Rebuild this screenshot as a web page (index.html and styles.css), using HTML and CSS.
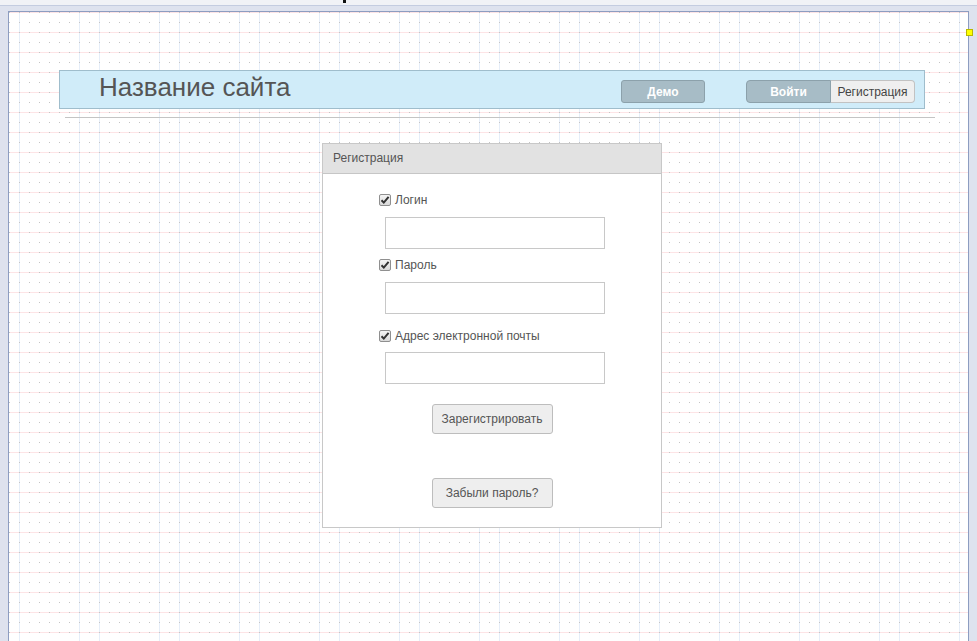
FILE: index.html
```html
<!DOCTYPE html>
<html lang="ru">
<head>
<meta charset="utf-8">
<title>Регистрация</title>
<link rel="stylesheet" href="styles.css">
</head>
<body>
<div class="topbar"><span class="cursor-mark"></span></div>
<div class="workspace">
  <div class="canvas">
    <span class="handle"></span>
    <header class="site-header">
      <h1 class="site-title">Название сайта</h1>
      <div class="header-actions">
        <button class="btn-demo">Демо</button>
        <div class="auth-group">
          <button class="auth-login">Войти</button>
          <button class="auth-register">Регистрация</button>
        </div>
      </div>
    </header>
    <hr class="separator">
    <section class="panel">
      <div class="panel-head">Регистрация</div>
      <div class="panel-body">
        <label class="check-row row-1"><span class="check"><svg viewBox="0 0 12 12" width="12" height="12"><path d="M2.5 6.2 L4.8 8.6 L9.6 2.8" fill="none" stroke="#333" stroke-width="2"/></svg></span>Логин</label>
        <div class="field"></div>
        <label class="check-row row-2"><span class="check"><svg viewBox="0 0 12 12" width="12" height="12"><path d="M2.5 6.2 L4.8 8.6 L9.6 2.8" fill="none" stroke="#333" stroke-width="2"/></svg></span>Пароль</label>
        <div class="field"></div>
        <label class="check-row row-3"><span class="check"><svg viewBox="0 0 12 12" width="12" height="12"><path d="M2.5 6.2 L4.8 8.6 L9.6 2.8" fill="none" stroke="#333" stroke-width="2"/></svg></span>Адрес электронной почты</label>
        <div class="field field-last"></div>
        <div class="actions">
          <button class="btn">Зарегистрировать</button>
          <button class="btn btn-forgot">Забыли пароль?</button>
        </div>
      </div>
    </section>
  </div>
</div>
</body>
</html>
```
FILE: styles.css
```css
* { box-sizing: border-box; }
html, body { margin: 0; padding: 0; }
body {
  width: 977px;
  height: 641px;
  overflow: hidden;
  background: #dee2ee;
  font-family: "Liberation Sans", Arial, sans-serif;
  color: #555;
}
.topbar {
  position: relative;
  height: 6px;
  background: #f1f2f6;
  border-bottom: 1px solid #c4cce0;
}
.cursor-mark {
  position: absolute;
  left: 343px;
  top: 0;
  width: 3px;
  height: 3px;
  background: #111;
}
.workspace {
  padding: 5px 8px 0 8px;
}
.canvas {
  position: relative;
  width: 961px;
  height: 630px;
  border-left: 1px solid #8d9dc1;
  border-top: 1px solid #8d9dc1;
  border-right: 1px solid #8d9dc1;
  background-color: #fff;
  background-image: url("data:image/svg+xml,%3Csvg xmlns='http://www.w3.org/2000/svg' width='80' height='20'%3E%3Crect x='10' y='0' width='1' height='20' fill='%23e6eef9'/%3E%3Crect x='70' y='0' width='1' height='20' fill='%23e6eef9'/%3E%3Crect x='0' y='0' width='80' height='1' fill='%23fde4e6'/%3E%3Cg fill='%23c4c4c4'%3E%3Crect x='0' y='0' width='1' height='1'/%3E%3Crect x='10' y='0' width='1' height='1'/%3E%3Crect x='20' y='0' width='1' height='1'/%3E%3Crect x='30' y='0' width='1' height='1'/%3E%3Crect x='40' y='0' width='1' height='1'/%3E%3Crect x='50' y='0' width='1' height='1'/%3E%3Crect x='60' y='0' width='1' height='1'/%3E%3Crect x='70' y='0' width='1' height='1'/%3E%3Crect x='0' y='10' width='1' height='1'/%3E%3Crect x='10' y='10' width='1' height='1'/%3E%3Crect x='20' y='10' width='1' height='1'/%3E%3Crect x='30' y='10' width='1' height='1'/%3E%3Crect x='40' y='10' width='1' height='1'/%3E%3Crect x='50' y='10' width='1' height='1'/%3E%3Crect x='60' y='10' width='1' height='1'/%3E%3Crect x='70' y='10' width='1' height='1'/%3E%3C/g%3E%3C/svg%3E");
  background-size: 80px 20px;
  background-position: 0 0;
  padding-top: 58px;
}
.handle {
  position: absolute;
  left: 957px;
  top: 17px;
  width: 7px;
  height: 7px;
  background: #ffff00;
  border: 1px solid #b8b800;
}
.site-header {
  margin-left: 50px;
  width: 866px;
  height: 39px;
  background: #d0ecf9;
  border: 1px solid #9fbdcc;
  display: flex;
  align-items: flex-start;
  justify-content: space-between;
}
.site-title {
  margin: 1px 0 0 39px;
  font-size: 26px;
  font-weight: normal;
  line-height: 30px;
  color: #555;
}
.header-actions {
  display: flex;
  align-items: flex-start;
  margin-top: 9px;
  margin-right: 9px;
}
button {
  font-family: "Liberation Sans", Arial, sans-serif;
  font-size: 12px;
  padding: 0;
  margin: 0;
  cursor: default;
}
.btn-demo {
  width: 84px;
  height: 23px;
  background: #a7bcc6;
  border: 1px solid #8ca1ab;
  border-radius: 3px;
  color: #fff;
  font-weight: bold;
  margin-right: 41px;
}
.auth-group {
  display: flex;
}
.auth-login {
  width: 85px;
  height: 23px;
  background: #a7bcc6;
  border: 1px solid #8ca1ab;
  border-radius: 4px 0 0 4px;
  color: #fff;
  font-weight: bold;
}
.auth-register {
  width: 84px;
  height: 23px;
  background: #efefef;
  border: 1px solid #c2c2c2;
  border-left: none;
  border-radius: 0 4px 4px 0;
  color: #444;
}
.separator {
  margin: 8px 0 0 56px;
  width: 870px;
  height: 0;
  border: none;
  border-top: 1px solid #c4c4c4;
}
.panel {
  margin: 25px 0 0 313px;
  width: 340px;
  border: 1px solid #c8c8c8;
  background: #fff;
}
.panel-head {
  height: 30px;
  background: #e2e2e2;
  border-bottom: 1px solid #c6c6c6;
  padding-left: 10px;
  font-size: 12px;
  line-height: 29px;
  color: #555;
}
.panel-body {
  padding: 19px 0 19px 56px;
}
.check-row {
  display: flex;
  align-items: center;
  height: 13px;
  font-size: 12px;
  color: #555;
}
.row-2 { margin-top: 9px; }
.row-3 { margin-top: 15px; }
.check {
  width: 12px;
  height: 12px;
  margin-right: 4px;
  border: 1px solid #8f8f8f;
  border-radius: 2px;
  background: linear-gradient(#f4f4f4, #d9d9d9);
  display: flex;
  align-items: center;
  justify-content: center;
  overflow: hidden;
}
.check svg { display: block; flex: none; }
.row-3 + .field { margin-top: 10px; }
.field {
  margin: 11px 0 0 6px;
  width: 220px;
  height: 32px;
  border: 1px solid #c8c8c8;
  background: #fff;
}
.actions {
  margin-left: -56px;
  display: flex;
  flex-direction: column;
  align-items: center;
  padding-top: 20px;
  gap: 44px;
}
.btn {
  width: 121px;
  height: 30px;
  background: #eee;
  border: 1px solid #bdbdbd;
  border-radius: 3px;
  color: #555;
}
```
